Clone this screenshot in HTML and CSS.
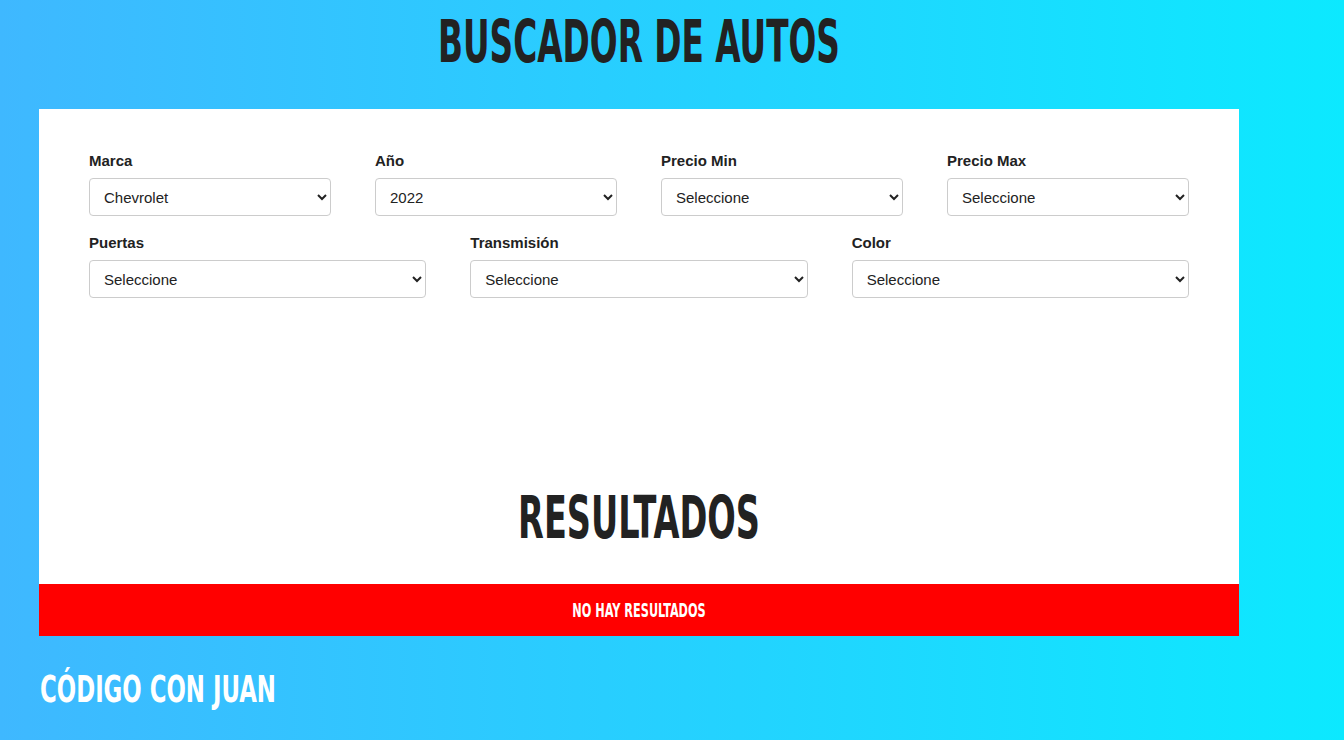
FILE: index.html
```html
<!DOCTYPE html>
<html lang="es">
<head>
<meta charset="utf-8">
<title>Buscador de Autos</title>
<link rel="stylesheet" href="styles.css">
</head>
<body>
<header class="site-header">
  <h1 class="title">Buscador de Autos</h1>
</header>
<main class="panel">
  <form class="filters">
    <div class="row row-4">
      <div class="field">
        <label class="field-label" for="marca">Marca</label>
        <select class="field-select" id="marca"><option>Seleccione</option><option selected>Chevrolet</option></select>
      </div>
      <div class="field">
        <label class="field-label" for="year">Año</label>
        <select class="field-select" id="year"><option>Seleccione</option><option selected>2022</option></select>
      </div>
      <div class="field">
        <label class="field-label" for="minimo">Precio Min</label>
        <select class="field-select" id="minimo"><option>Seleccione</option></select>
      </div>
      <div class="field">
        <label class="field-label" for="maximo">Precio Max</label>
        <select class="field-select" id="maximo"><option>Seleccione</option></select>
      </div>
    </div>
    <div class="row row-3">
      <div class="field">
        <label class="field-label" for="puertas">Puertas</label>
        <select class="field-select" id="puertas"><option>Seleccione</option></select>
      </div>
      <div class="field">
        <label class="field-label" for="transmision">Transmisión</label>
        <select class="field-select" id="transmision"><option>Seleccione</option></select>
      </div>
      <div class="field">
        <label class="field-label" for="color">Color</label>
        <select class="field-select" id="color"><option>Seleccione</option></select>
      </div>
    </div>
  </form>
  <h2 class="results-title">Resultados</h2>
  <div class="alert"><span class="alert-text">No hay resultados</span></div>
</main>
<footer class="site-footer">
  <p class="footer-text">Código con Juan</p>
</footer>
</body>
</html>
```
FILE: styles.css
```css
* { box-sizing: border-box; }

html, body {
  margin: 0;
  padding: 0;
}

body {
  min-height: 740px;
  background: linear-gradient(to right, #3fb8ff 0%, #0ce9ff 100%);
  font-family: "Liberation Sans", Arial, sans-serif;
  color: #222;
  overflow: hidden;
}

.title,
.results-title,
.alert-text,
.footer-text {
  font-family: "DejaVu Sans Condensed", "DejaVu Sans", sans-serif;
  font-stretch: condensed;
  font-weight: 700;
  text-transform: uppercase;
}

.site-header {
  width: 1200px;
  margin-left: 39px;
  padding: 13px 0 38px;
}

.title {
  margin: 0;
  font-size: 58px;
  line-height: 58px;
  color: #222;
  text-align: center;
  transform: scaleX(0.628);
}

.panel {
  width: 1200px;
  margin-left: 39px;
  background: #fff;
}

.filters {
  padding: 43px 50px 0;
}

.row {
  display: grid;
  column-gap: 44px;
}

.row-4 { grid-template-columns: repeat(4, 1fr); }
.row-3 { grid-template-columns: repeat(3, 1fr); margin-top: 18px; }

.field {
  display: flex;
  flex-direction: column;
}

.field-label {
  font-size: 15px;
  line-height: 18px;
  font-weight: 700;
  color: #222;
  margin-bottom: 8px;
}

.field-select {
  width: 100%;
  height: 38px;
  padding: 0 10px;
  font-family: "Liberation Sans", Arial, sans-serif;
  font-size: 15px;
  color: #222;
  background: #fff;
  border: 1px solid #ccc;
  border-radius: 4px;
}

.results-title {
  margin: 190px 0 0;
  font-size: 59px;
  line-height: 59px;
  color: #222;
  text-align: center;
  transform: scaleX(0.632);
}

.alert {
  margin-top: 37px;
  height: 52px;
  line-height: 52px;
  background: #ff0000;
  text-align: center;
}

.alert-text {
  display: inline-block;
  color: #fff;
  font-size: 19px;
  transform: scaleX(0.66);
}

.site-footer {
  padding: 35px 0 0 40px;
}

.footer-text {
  margin: 0;
  font-size: 37px;
  line-height: 37px;
  color: #fff;
  transform: scaleX(0.686);
  transform-origin: left center;
}
```
